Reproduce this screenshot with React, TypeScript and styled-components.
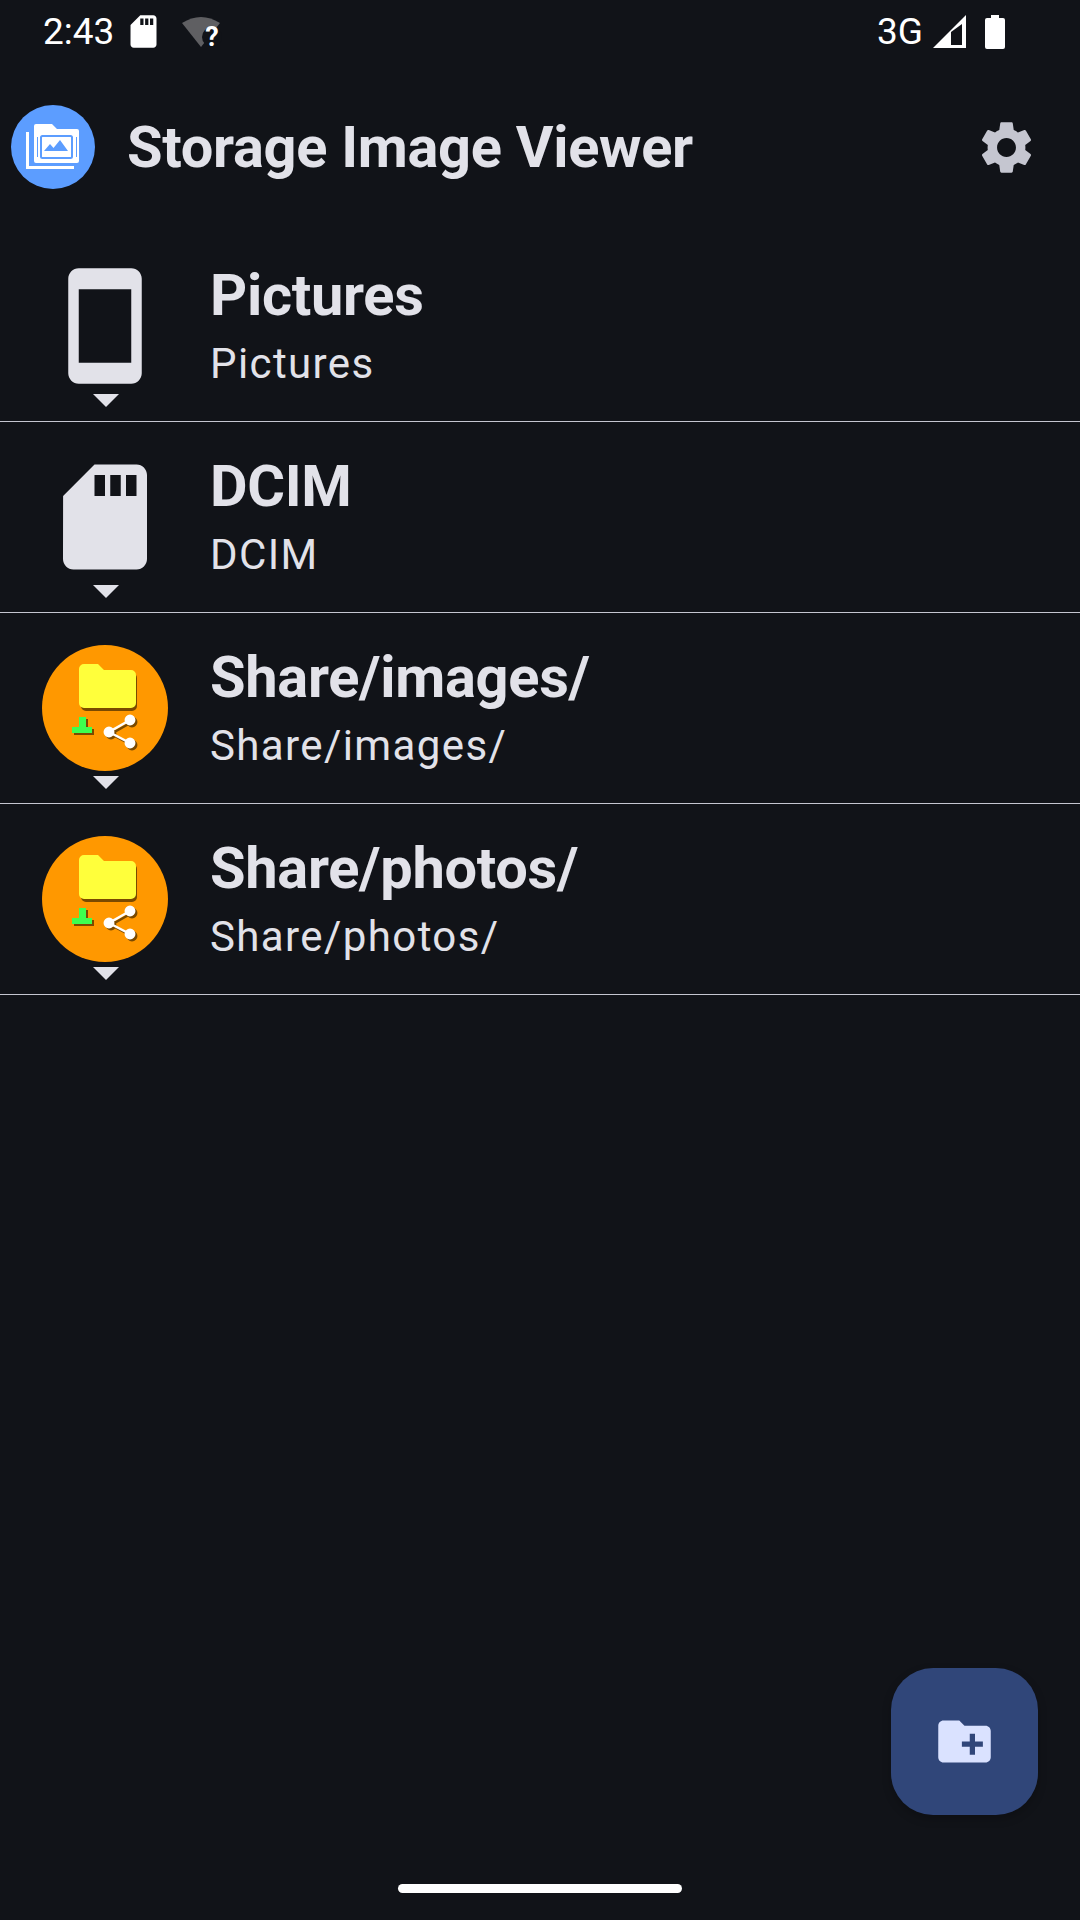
import React from 'react';
import styled, { createGlobalStyle } from 'styled-components';

const GlobalStyle = createGlobalStyle`
    html, body {
        margin: 0;
        padding: 0;
        background-color: #111318;
        font-family: Roboto, "Liberation Sans", sans-serif;
    }
`;

const Page = styled.div`
    display: flex;
    flex-direction: column;
    width: 1080px;
    height: 1920px;
    overflow: hidden;
    background-color: #111318;
    color: #e2e2e9;
`;

const StatusBar = styled.div`
    display: flex;
    justify-content: space-between;
    align-items: center;
    height: 63px;
    flex: none;
    padding: 0 75px 0 43px;
    color: #ffffff;
`;

const StatusGroup = styled.div`
    display: flex;
    align-items: center;
`;

const StatusText = styled.span`
    font-size: 37px;
    line-height: 63px;
`;

const AppBar = styled.div`
    display: flex;
    align-items: center;
    height: 168px;
    flex: none;
    padding: 0 42px 0 11px;
`;

const AppTitle = styled.h1`
    flex: 1;
    margin: 0 0 0 32px;
    font-size: 57.75px;
    font-weight: 700;
    letter-spacing: -0.3px;
    color: #e2e2e9;
`;

const GearButton = styled.svg`
    width: 63px;
    height: 63px;
    fill: #c5c6d0;
`;

const List = styled.div`
    display: flex;
    flex-direction: column;
`;

const Row = styled.div`
    display: flex;
    height: 190px;
    padding-left: 42px;
    border-bottom: 1.5px solid #c5c6d0;
`;

const IconColumn = styled.div`
    display: flex;
    flex-direction: column;
    align-items: center;
    width: 126px;
    padding-top: 32px;
`;

const RowIcon = styled.svg`
    display: block;
    width: 126px;
    height: 126px;
    flex: none;
    fill: #e2e2e9;
`;

const Arrow = styled.div`
    width: 0;
    height: 0;
    margin: 5px 0 0 2px;
    border-left: 13px solid transparent;
    border-right: 13px solid transparent;
    border-top: 13px solid #e2e2e9;
`;

const RowText = styled.div`
    display: flex;
    flex-direction: column;
    margin-left: 42px;
    padding-top: 27px;
`;

const RowTitle = styled.div`
    font-size: 57.75px;
    line-height: 75px;
    font-weight: 700;
    letter-spacing: -0.3px;
    color: #e2e2e9;
`;

const RowSub = styled.div`
    font-size: 42px;
    line-height: 62px;
    letter-spacing: 1.4px;
    color: #e2e2e9;
`;

const Spacer = styled.div`
    flex: 1;
`;

const FabRow = styled.div`
    display: flex;
    justify-content: flex-end;
    padding-right: 42px;
`;

const Fab = styled.button`
    display: flex;
    justify-content: center;
    align-items: center;
    width: 147px;
    height: 147px;
    padding: 0;
    border: none;
    border-radius: 42px;
    background-color: #304679;
    box-shadow: 0 4px 10px rgba(0, 0, 0, 0.22);
`;

const FabIcon = styled.svg`
    width: 63px;
    height: 63px;
    fill: #dae2ff;
`;

const HomeBar = styled.div`
    display: flex;
    justify-content: center;
    padding: 69px 0 27px;
`;

const HomePill = styled.div`
    width: 284px;
    height: 9px;
    border-radius: 5px;
    background-color: #ffffff;
`;

const SD_PATH = 'M18 2h-8L4.02 8 4 20c0 1.1.9 2 2 2h12c1.1 0 2-.9 2-2V4c0-1.1-.9-2-2-2zm-6 6h-2V4h2v4zm3 0h-2V4h2v4zm3 0h-2V4h2v4z';

const StatusSd = styled.svg`
    width: 39px;
    height: 39px;
    margin: 0 0 0 10px;
    fill: #ffffff;
`;

const StatusWifi = styled.svg`
    width: 40px;
    height: 34px;
    margin-left: 18px;
    overflow: visible;
`;

const StatusSignal = styled.svg`
    width: 33px;
    height: 33px;
    margin-left: 10px;
`;

const StatusBattery = styled.svg`
    width: 20px;
    height: 34px;
    margin-left: 19px;
`;

function PhoneIcon() {
    return (
        <RowIcon viewBox="0 0 24 24">
            <path d="M17 1.01 7 1c-1.1 0-2 .9-2 2v18c0 1.1.9 2 2 2h10c1.1 0 2-.9 2-2V3c0-1.1-.9-1.99-2-1.99zM17 19H7V5h10v14z" />
        </RowIcon>
    );
}

function SdIcon() {
    return (
        <RowIcon viewBox="0 0 24 24">
            <path d={SD_PATH} />
        </RowIcon>
    );
}

function ShareFolderIcon() {
    return (
        <RowIcon viewBox="0 0 126 126">
            <circle cx="63" cy="63" r="63" fill="#ff9800" />
            <path d="M44 22h13l6 6h27a5 5 0 0 1 5 5v28a5 5 0 0 1-5 5H44a5 5 0 0 1-5-5V27a5 5 0 0 1 5-5z" fill="#7a4a00" />
            <path d="M42 19h14l6 6h27a5 5 0 0 1 5 5v28a5 5 0 0 1-5 5H42a5 5 0 0 1-5-5V24a5 5 0 0 1 5-5z" fill="#ffff3b" />
            <path d="M39 74h7v10h6v6H32v-6h7z" fill="#7a4a00" />
            <path d="M37 72h7v10h6v6H30v-6h7z" fill="#3dff4f" />
            <g stroke="#7a4a00" strokeWidth="2.5" fill="#7a4a00">
                <path d="M90 77 69 89l21 11" fill="none" />
                <circle cx="90" cy="77" r="4.2" />
                <circle cx="69" cy="89" r="4.2" />
                <circle cx="90" cy="100" r="4.2" />
            </g>
            <g stroke="#ffffff" strokeWidth="2.5" fill="#ffffff">
                <path d="M88 75 67 87l21 11" fill="none" />
                <circle cx="88" cy="75" r="4.2" />
                <circle cx="67" cy="87" r="4.2" />
                <circle cx="88" cy="98" r="4.2" />
            </g>
        </RowIcon>
    );
}

const AppLogo = styled.svg`
    width: 84px;
    height: 84px;
    flex: none;
`;

function AppIcon() {
    return (
        <AppLogo viewBox="0 0 84 84">
            <circle cx="42" cy="42" r="42" fill="#5c9dff" />
            <path d="M15 27h3v34h45v3H15z" fill="#ffffff" />
            <path d="M25 19h16l5 5h20a2 2 0 0 1 2 2v30a2 2 0 0 1-2 2H25a2 2 0 0 1-2-2V21a2 2 0 0 1 2-2z" fill="#ffffff" />
            <rect x="30" y="31" width="31" height="22" rx="1.5" fill="none" stroke="#5c9dff" strokeWidth="2" />
            <path d="M26 32h1v20h-1zM65 32h1v20h-1z" fill="#5c9dff" />
            <path d="M33 46l6-7 3.500 4 6.500-8 8 11z" fill="#5c9dff" />
        </AppLogo>
    );
}

const rows = [
    { title: 'Pictures', sub: 'Pictures', Icon: PhoneIcon },
    { title: 'DCIM', sub: 'DCIM', Icon: SdIcon },
    { title: 'Share/images/', sub: 'Share/images/', Icon: ShareFolderIcon },
    { title: 'Share/photos/', sub: 'Share/photos/', Icon: ShareFolderIcon },
];

export default function App() {
    return (
        <Page>
            <GlobalStyle />
            <StatusBar>
                <StatusGroup>
                    <StatusText>2:43</StatusText>
                    <StatusSd viewBox="0 0 24 24">
                        <path d={SD_PATH} />
                    </StatusSd>
                    <StatusWifi viewBox="0 0 40 34">
                        <path d="M1 8Q20-4 39 8L20 32z" fill="#5f5f62" />
                        <circle cx="31" cy="22" r="10" fill="#111318" />
                        <text x="31" y="31" textAnchor="middle" fontSize="27" fontWeight="700" fontFamily="Roboto, sans-serif" fill="#ffffff">?</text>
                    </StatusWifi>
                </StatusGroup>
                <StatusGroup>
                    <StatusText>3G</StatusText>
                    <StatusSignal viewBox="0 0 33 33">
                        <path d="M33 0v33H0z" fill="#ffffff" />
                        <path d="M18 17l11-8v21H18z" fill="#111318" />
                    </StatusSignal>
                    <StatusBattery viewBox="0 0 20 34">
                        <path d="M6 0h8v3h4a2 2 0 0 1 2 2v27a2 2 0 0 1-2 2H2a2 2 0 0 1-2-2V5a2 2 0 0 1 2-2h4z" fill="#ffffff" />
                    </StatusBattery>
                </StatusGroup>
            </StatusBar>
            <AppBar>
                <AppIcon />
                <AppTitle>Storage Image Viewer</AppTitle>
                <GearButton viewBox="0 0 24 24">
                    <path d="M19.14 12.94c.04-.3.06-.61.06-.94 0-.32-.02-.64-.07-.94l2.03-1.58c.18-.14.23-.41.12-.61l-1.92-3.32c-.12-.22-.37-.29-.59-.22l-2.39.96c-.5-.38-1.03-.7-1.62-.94l-.36-2.54c-.04-.24-.24-.41-.48-.41h-3.84c-.24 0-.43.17-.47.41l-.36 2.54c-.59.24-1.13.57-1.62.94l-2.39-.96c-.22-.08-.47 0-.59.22L2.74 8.87c-.12.21-.08.47.12.61l2.03 1.58c-.05.3-.09.63-.09.94s.02.64.07.94l-2.03 1.58c-.18.14-.23.41-.12.61l1.92 3.32c.12.22.37.29.59.22l2.39-.96c.5.38 1.03.7 1.62.94l.36 2.54c.05.24.24.41.48.41h3.84c.24 0 .44-.17.47-.41l.36-2.54c.59-.24 1.13-.56 1.62-.94l2.39.96c.22.08.47 0 .59-.22l1.92-3.32c.12-.22.07-.47-.12-.61l-2.01-1.58zM12 15.6c-1.98 0-3.6-1.62-3.6-3.6s1.62-3.6 3.6-3.6 3.6 1.62 3.6 3.6-1.62 3.6-3.6 3.6z" />
                </GearButton>
            </AppBar>
            <List>
                {rows.map(({ title, sub, Icon }) => (
                    <Row key={title}>
                        <IconColumn>
                            <Icon />
                            <Arrow />
                        </IconColumn>
                        <RowText>
                            <RowTitle>{title}</RowTitle>
                            <RowSub>{sub}</RowSub>
                        </RowText>
                    </Row>
                ))}
            </List>
            <Spacer />
            <FabRow>
                <Fab>
                    <FabIcon viewBox="0 0 24 24">
                        <path d="M20 6h-8l-2-2H4c-1.11 0-1.99.89-1.99 2L2 18c0 1.11.89 2 2 2h16c1.11 0 2-.89 2-2V8c0-1.11-.89-2-2-2zm-1 8h-3v3h-2v-3h-3v-2h3V9h2v3h3v2z" />
                    </FabIcon>
                </Fab>
            </FabRow>
            <HomeBar>
                <HomePill />
            </HomeBar>
        </Page>
    );
}
